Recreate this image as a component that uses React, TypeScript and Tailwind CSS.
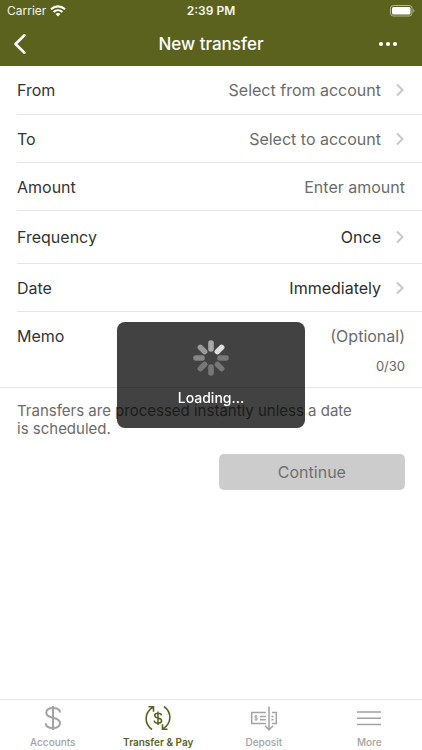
import React from "react";

const Chevron = () => (
  <svg width="8" height="14" viewBox="0 0 8 14" fill="none" stroke="#c8c8cb" strokeWidth="2" aria-hidden="true">
    <path d="M1 1.500 6.600 7 1 12.500" />
  </svg>
);

function PickerRow({ label, value, height, chosen }: { label: string; value: string; height: string; chosen?: boolean }) {
  return (
    <button type="button" className={`flex w-full items-center border-b border-[#e6e6e6] pr-[18px] text-left ${height}`}>
      <span className="flex-1">{label}</span>
      <span className={`mr-[15px] ${chosen ? "text-[#2d2d2d]" : "text-[#6b6b6b]"}`}>{value}</span>
      <Chevron />
    </button>
  );
}

function StatusBar() {
  return (
    <div className="grid h-[22px] grid-cols-3 items-center px-[7px] text-xs text-[#f5f6ec]">
      <div className="flex items-center gap-1">
        <span>Carrier</span>
        <svg width="16" height="12" viewBox="0 0 16 12" fill="none" stroke="#ffffff" strokeWidth="2.1" aria-hidden="true">
          <path d="M1 4.2C5 .4 11 .4 15 4.2" />
          <path d="M3.6 7c2.5-2.3 6.3-2.3 8.8 0" />
          <path d="M8 11.4 5.6 9c1.4-1.2 3.4-1.2 4.8 0Z" fill="#ffffff" stroke="none" />
        </svg>
      </div>
      <span className="text-center font-semibold">2:39 PM</span>
      <svg className="justify-self-end" width="25" height="12" viewBox="0 0 25 12" aria-hidden="true">
        <rect x="0.5" y="0.5" width="21.5" height="10.5" rx="2.8" fill="none" stroke="#b4b895" />
        <rect x="2" y="2" width="18.5" height="7.5" rx="1.5" fill="#ffffff" />
        <path d="M23.300 4c1.500.6 1.500 2.900 0 3.500Z" fill="#b4b895" />
      </svg>
    </div>
  );
}

const spokes = ["#a9a9a9", "#dedede", "#777777", "#777777", "#777777", "#777777", "#858585", "#999999"];

function LoadingPanel() {
  return (
    <div className="pointer-events-none fixed inset-0 flex items-center justify-center">
      <div role="status" className="flex h-[106px] w-[188px] flex-col items-center rounded-lg bg-black/74 pt-[18px]">
        <svg width="36" height="36" viewBox="-18 -18 36 36" strokeWidth="5.6" strokeLinecap="round" aria-hidden="true">
          {spokes.map((color, i) => (
            <path key={i} d="M0-9V-15" stroke={color} transform={`rotate(${i * 45})`} />
          ))}
        </svg>
        <span className="mt-3 text-sm leading-5 font-medium text-white">Loading...</span>
      </div>
    </div>
  );
}

function Tab({ label, active, children }: { label: string; active?: boolean; children: React.ReactNode }) {
  return (
    <button
      type="button"
      aria-current={active ? "page" : undefined}
      className={`flex flex-col items-center pt-1 ${active ? "font-semibold text-[#5a621e]" : "font-medium text-[#a3a3a3]"}`}
    >
      <svg width="30" height="28" viewBox="0 0 30 28" fill="none" stroke="currentColor" aria-hidden="true">
        {children}
      </svg>
      <span className="mt-[2px] text-[10px] leading-4">{label}</span>
    </button>
  );
}

export default function App() {
  return (
    <div className="flex min-h-screen flex-col bg-white font-['Inter','Liberation_Sans',sans-serif] text-base text-[#333333]">
      <header className="h-[66px] bg-[#5a621e] text-white">
        <StatusBar />
        <div className="grid h-[44px] grid-cols-3 items-center px-3">
          <button type="button" aria-label="Back" className="justify-self-start">
            <svg width="16" height="22" viewBox="0 0 16 22" fill="none" stroke="currentColor" strokeWidth="2.6" strokeLinecap="round" strokeLinejoin="round">
              <path d="M12.5 2.3 3.5 11l9 8.7" />
            </svg>
          </button>
          <h1 className="text-center text-[17px] leading-6 font-medium whitespace-nowrap">New transfer</h1>
          <button type="button" aria-label="More options" className="justify-self-end px-3">
            <svg width="20" height="6" viewBox="0 0 20 6" fill="currentColor">
              <circle cx="3" cy="3" r="2.1" />
              <circle cx="10" cy="3" r="2.1" />
              <circle cx="17" cy="3" r="2.1" />
            </svg>
          </button>
        </div>
      </header>

      <main className="flex-1">
        <form>
          <div className="pl-[17px]">
            <PickerRow label="From" value="Select from account" height="h-[49px]" />
            <PickerRow label="To" value="Select to account" height="h-12" />
            <div className="flex h-12 items-center border-b border-[#e6e6e6] pr-[17px]">
              <label htmlFor="amount">Amount</label>
              <input
                id="amount"
                inputMode="decimal"
                placeholder="Enter amount"
                className="min-w-0 flex-1 text-right outline-none placeholder:text-[#6b6b6b]"
              />
            </div>
            <PickerRow label="Frequency" value="Once" height="h-[53px]" chosen />
            <PickerRow label="Date" value="Immediately" height="h-12" chosen />
          </div>
          <div className="h-[76px] border-b border-[#e6e6e6] px-[17px] pt-3">
            <div className="flex items-center">
              <label htmlFor="memo">Memo</label>
              <input
                id="memo"
                maxLength={30}
                placeholder="(Optional)"
                className="min-w-0 flex-1 text-right outline-none placeholder:text-[#6b6b6b]"
              />
            </div>
            <p className="mt-2 text-right text-[13px] leading-5 text-[#666666]">0/30</p>
          </div>
          <div className="px-[17px] pt-[14px]">
            <p className="max-w-[340px] text-[15px] leading-[18px] text-[#6b6b6b]">
              Transfers are processed instantly unless a date is scheduled.
            </p>
            <button
              type="button"
              disabled
              className="mt-4 ml-auto block h-9 w-[48%] rounded-[5px] bg-[#cccccc] text-[#6f6f6f]"
            >
              Continue
            </button>
          </div>
        </form>
      </main>

      <nav className="grid h-[51px] grid-cols-4 border-t border-[#e6e6e6]">
        <Tab label="Accounts">
          <path strokeWidth="2" d="M15 2v24M22 8.5c0-3-2.5-4.5-7-4.5s-6.700 2-6.700 4.700c0 3 2.700 4.100 6.700 5s7 2.200 7 5.300-3 5-7 5-7.200-1.600-7.200-4.800" />
        </Tab>
        <Tab label="Transfer &amp; Pay" active>
          <path strokeWidth="1.600" d="M9 25.500C1 19.500 1 9 10 3.200M5.500 2.800h5v5M21 2.500C29 8.500 29 19 20 24.800M24.500 25.200h-5v-5" />
          <path strokeWidth="1.500" d="M15 7.500v13.500M18.500 11.600c0-1.500-1.300-2.300-3.500-2.300s-3.300.9-3.300 2.300 1.200 2 3.300 2.400 3.600 1.100 3.600 2.700-1.400 2.500-3.600 2.500-3.700-.9-3.700-2.600" />
        </Tab>
        <Tab label="Deposit">
          <path strokeWidth="1.500" d="M17 8.500H2.700v11H17M23 8.500h4.300v11H23M11 12.500h6M11 15.800h6M22.500 12.500h2M22.500 15.800h2" />
          <path strokeWidth="1.500" d="M20 2.500v23M16 21.800l4 4.200 4-4.200" />
          <path strokeWidth="1" d="M7 11v6M8.400 12.300c-.5-.8-2.800-.8-2.800.4s2.900.8 2.900 2.100-2.500 1.200-3 .3" />
        </Tab>
        <Tab label="More">
          <path strokeWidth="1.500" d="M3 8h24M3 14.300h24M3 20.500h24" />
        </Tab>
      </nav>

      <LoadingPanel />
    </div>
  );
}
